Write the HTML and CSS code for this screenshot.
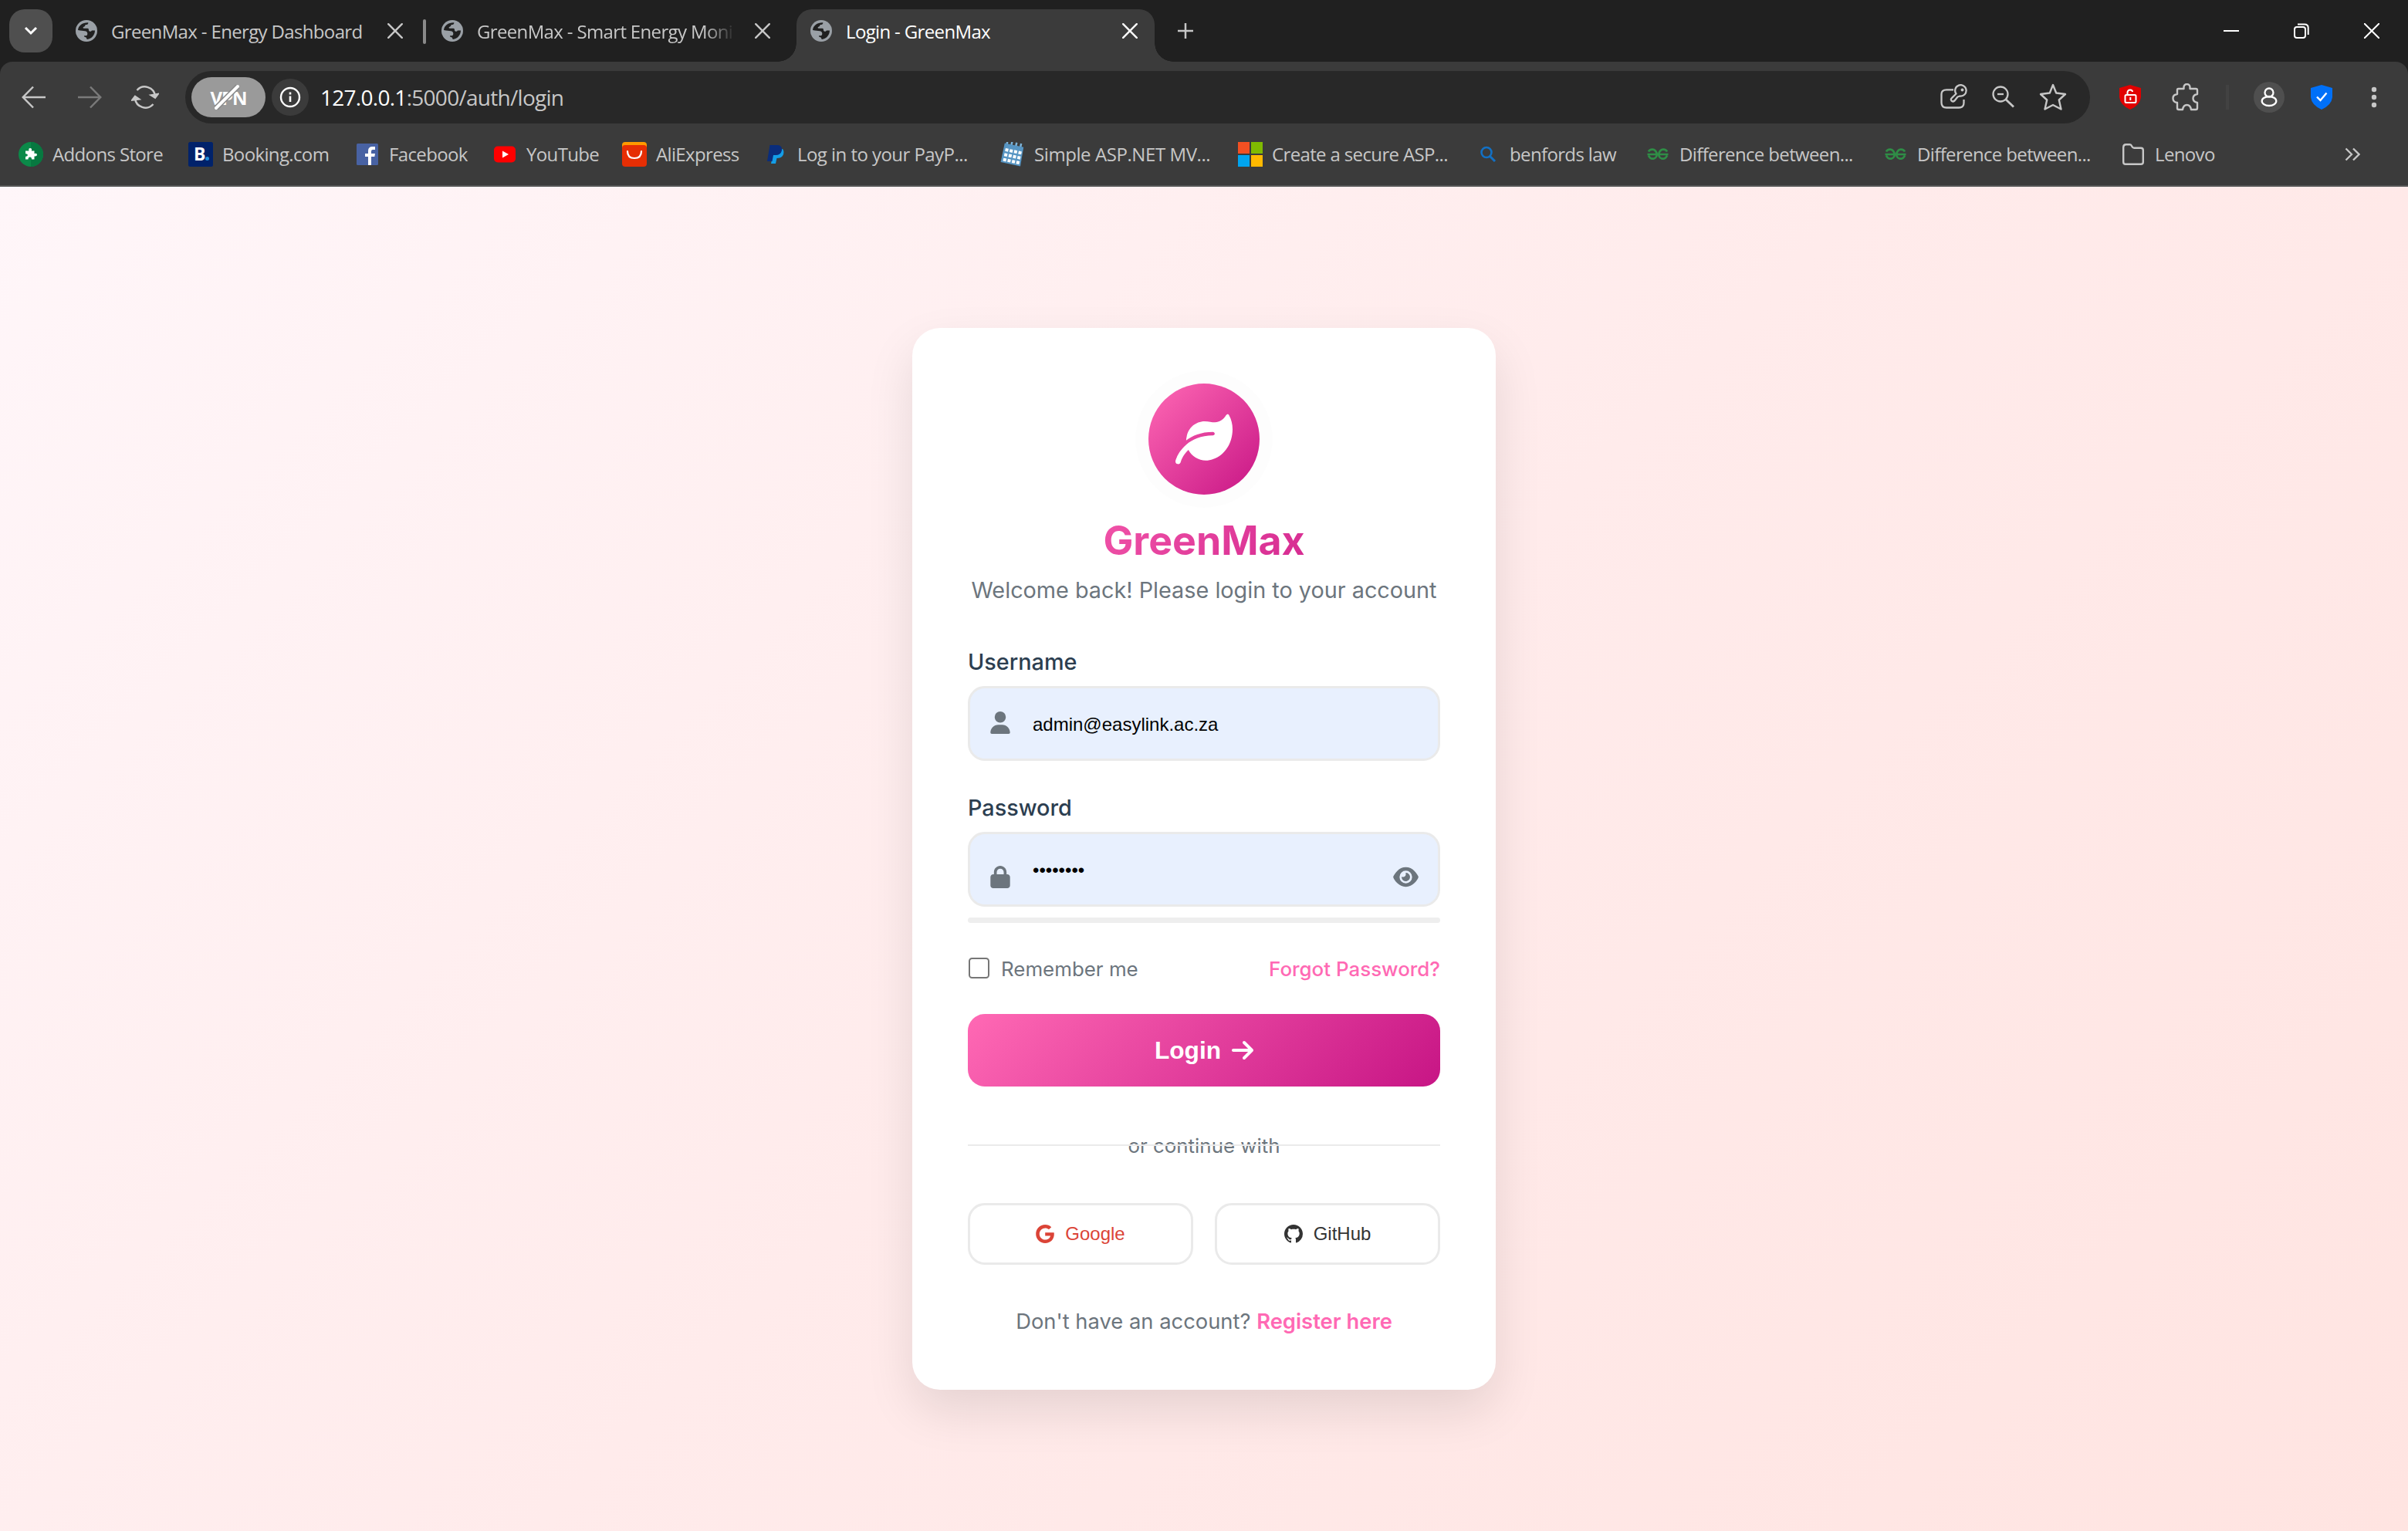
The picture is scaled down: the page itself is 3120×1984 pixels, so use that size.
FILE: index.html
```html
<!DOCTYPE html>
<html lang="en">
<head>
  <meta charset="UTF-8">
  <title>Login - GreenMax</title>
  <link rel="stylesheet" href="styles.css">
</head>
<body>
  <svg width="0" height="0" class="defs">
    <symbol id="globe" viewBox="0 0 28 28">
      <circle cx="14" cy="14" r="14" fill="#9aa0a6"/>
      <path class="land" d="M3 13C3.500 7 9 3 16.300 3.200C16.500 5.500 15 6 13 6C12 6.500 12.500 8.500 10.500 8.800C9 9.500 9.500 11 11 10.700H15.500C16.800 10.700 17 12 17 13.500C18 15.500 20 15 21 13.600H25C25 19.500 20.500 24.500 15 25C14 25 14.500 22.500 13 22.300C11.500 22.300 11 21.500 11 20.300H13.500C14.800 20.300 15.300 19 15.300 17.500C15.300 15.500 14 14.300 12 14.200C9.500 14 7 13.800 3 13Z"/>
    </symbol>
    <symbol id="x" viewBox="0 0 20 20"><path d="M1.200 1.200L18.800 18.800M18.800 1.200L1.200 18.800" stroke="currentColor" stroke-width="2.400" stroke-linecap="round"/></symbol>
    <symbol id="gfg" viewBox="0 0 28 16"><path d="M2 4.500C4 .5 10.500 0 12.500 6.500C14 14 5 16.500 2 9.500M26 4.500C24 .5 17.500 0 15.500 6.500C14 14 23 16.500 26 9.500M.5 8H27.500" fill="none" stroke="#2f8d46" stroke-width="2.700"/></symbol>
  </svg>

  <div class="tabs">
    <div class="tab-search"><svg width="18" height="12" viewBox="0 0 18 12"><path d="M2 2L9 9L16 2" fill="none" stroke="#fff" stroke-width="3"/></svg></div>
    <div class="tab">
      <svg class="globe"><use href="#globe"/></svg>
      <span class="tab-title">GreenMax - Energy Dashboard</span>
      <svg class="close"><use href="#x"/></svg>
    </div>
    <div class="tab-sep"></div>
    <div class="tab second">
      <svg class="globe"><use href="#globe"/></svg>
      <span class="tab-title fade">GreenMax - Smart Energy Moni</span>
      <svg class="close"><use href="#x"/></svg>
    </div>
    <div class="tab active">
      <svg class="globe"><use href="#globe"/></svg>
      <span class="tab-title">Login - GreenMax</span>
      <svg class="close"><use href="#x"/></svg>
    </div>
    <svg class="plus" width="20" height="20"><path d="M10 0V20M0 10H20" stroke="#c7c7c7" stroke-width="2.500"/></svg>
    <div class="window-buttons">
      <svg width="20" height="20"><path d="M0 10H20" stroke="#fff" stroke-width="2"/></svg>
      <svg width="20" height="20" fill="none" stroke="#fff" stroke-width="2"><rect x="1" y="5" width="14" height="14" rx="3"/><path d="M5 1.500H14Q18.700 1.500 18.700 6V15"/></svg>
      <svg width="20" height="20"><path d="M0 0L20 20M20 0L0 20" stroke="#fff" stroke-width="2"/></svg>
    </div>
  </div>

  <div class="toolbar-wrap">
    <div class="toolbar">
      <div class="nav">
        <svg width="32" height="30" fill="none" stroke="#c7c7c7" stroke-width="2.500"><path d="M31 15H2M15 1.500L1.800 15L15 28.500"/></svg>
        <svg width="32" height="30" fill="none" stroke="#7a7a7a" stroke-width="2.500"><path d="M1 15H30M17 1.500L30.200 15L17 28.500"/></svg>
        <svg width="36" height="30" fill="none" stroke="#c7c7c7" stroke-width="2.500"><path d="M7.500 6A13.500 13.500 0 0 1 31 13.500M28.500 24A13.500 13.500 0 0 1 5 16.500"/><path d="M26 12.500L31 15.500L34.500 11ZM1.500 18.500L5 14L10 17.500Z" fill="#c7c7c7"/></svg>
      </div>
      <div class="omnibox">
        <div class="vpn">VPN<svg class="vpn-slash" width="36" height="36"><path d="M4 32L32 4" stroke="#858585" stroke-width="7"/><path d="M4 32L32 4" stroke="#fff" stroke-width="4" stroke-linecap="round"/></svg></div>
        <div class="info"><svg width="28" height="28"><circle cx="14" cy="14" r="12" fill="none" stroke="#fff" stroke-width="2.400"/><path d="M14 12.500V20M14 7.500V10.500" stroke="#fff" stroke-width="2.600"/></svg></div>
        <div class="url"><b>127.0.0.1</b>:5000/auth/login</div>
        <div class="omni-icons">
          <svg width="36" height="34" viewBox="0 0 36 34" fill="none" stroke="#c7c7c7" stroke-width="2.300"><path d="M17 7.300H8Q1.500 7.300 1.500 13V24Q1.500 30.500 8 30.500H24Q30.500 30.500 30.500 24V20"/><path d="M20.500 12.500A7.200 7.200 0 1 1 25.500 15.500L22.500 16.500L18.500 21.500Q16 23.500 14.500 21.500T15 17.800Z" stroke-linejoin="round"/><circle cx="28.500" cy="7.500" r="1.900" fill="#c7c7c7" stroke="none"/></svg>
          <svg width="30" height="30" fill="none" stroke="#c7c7c7"><circle cx="11" cy="11" r="9.500" stroke-width="2.300"/><path d="M7 11H15" stroke-width="2.300"/><path d="M17.500 17.500L28 27.500" stroke-width="2.800"/></svg>
          <svg width="36" height="36" fill="none" stroke="#c7c7c7" stroke-width="2.400" stroke-linejoin="round"><path d="M18 2L22.200 12.500L34 14L25.800 21.500L28.500 33.500L18 28L7.500 33.500L10.200 21.500L2 14L13.800 12.500Z"/></svg>
        </div>
      </div>
      <div class="extensions">
        <svg width="28" height="32"><path d="M14 0L28 4V16Q27 26 14 32Q1 26 0 16V4Z" fill="#e10000"/><rect x="7.500" y="13" width="14" height="10" rx="1.500" fill="none" stroke="#fff" stroke-width="2"/><path d="M10.500 13V9.500Q11 6.500 14 6.500Q17 6.500 17 9" fill="none" stroke="#fff" stroke-width="2"/><path d="M14.300 16V20" stroke="#fff" stroke-width="2"/></svg>
        <svg width="36" height="36" fill="none" stroke="#c7c7c7" stroke-width="2.400" stroke-linejoin="round"><path d="M7 8.500Q7 7 8.500 7H15.500V5A4 4 0 0 1 23.500 5V7H31Q33 7 33 9V14Q27.500 15 27.500 19.500T33 25V32Q33 34 31 34H25Q24 28 19.500 28T14 34H9Q7 34 7 32V25Q1.500 24.500 1.500 19.500T7 14Z"/></svg>
        <div class="ext-sep"></div>
        <div class="avatar"><svg width="22" height="26" fill="none" stroke="#fff" stroke-width="2.300"><circle cx="11" cy="7" r="5.500"/><ellipse cx="11" cy="18" rx="9.300" ry="6"/></svg></div>
        <svg width="28" height="32"><path d="M14 0L28 4V16Q27 26 14 32Q1 26 0 16V4Z" fill="#0070f8"/><path d="M8 15.500L12.500 20L20.500 10.500" fill="none" stroke="#fff" stroke-width="2.400"/></svg>
        <svg width="8" height="28" fill="#c7c7c7"><circle cx="4" cy="4" r="3.200"/><circle cx="4" cy="14" r="3.200"/><circle cx="4" cy="24" r="3.200"/></svg>
      </div>
    </div>

    <div class="bookmarks">
      <div class="bm w-addons"><svg viewBox="0 0 32 32"><circle cx="16" cy="16" r="16" fill="#0b8a49"/><path d="M16 0A16 16 0 0 1 16 32Z" fill="#077840"/><path d="M9 11.500H13.500Q12.500 8 15 8Q18 8 16.800 11.500H20.500V15Q24 14 24 16.500T20.500 18.500V22.500H17Q17 19.500 14.800 19.500T12.500 22.500H9V19Q12 18.500 12 17T9 15Z" fill="#fff"/></svg><span>Addons Store</span></div>
      <div class="bm w-booking"><svg viewBox="0 0 32 32"><rect width="32" height="32" rx="2.500" fill="#00226b"/><circle cx="24.500" cy="21.500" r="2.500" fill="#1f8fdc"/><text x="7" y="24" class="b-letter">B</text></svg><span>Booking.com</span></div>
      <div class="bm w-facebook"><svg viewBox="0 0 32 32"><rect x="2" y="2" width="28" height="28" rx="1.500" fill="#4862a3"/><path d="M17 30V19H13V15H17V11.500Q17 6 22.500 6H26V10H23Q21 10 21 12V15H26L25.300 19H21V30Z" fill="#fff"/></svg><span>Facebook</span></div>
      <div class="bm w-youtube"><svg viewBox="0 0 32 32"><rect x="2" y="5.500" width="28" height="21" rx="5" fill="#f00"/><path d="M13 11.500L21 16L13 20.500Z" fill="#fff"/></svg><span>YouTube</span></div>
      <div class="bm w-ali"><svg viewBox="0 0 32 32"><rect width="32" height="20" rx="4" fill="#ff9a00"/><path d="M0 8Q0 4 4 4H28Q32 4 32 8V28Q32 32 28 32H4Q0 32 0 28Z" fill="#e62e04"/><path d="M7 12Q7 21 16 21T25 12" fill="none" stroke="#fff" stroke-width="2.200" stroke-linecap="round"/></svg><span>AliExpress</span></div>
      <div class="bm w-paypal"><svg viewBox="0 0 32 32"><path d="M13 13L25 9Q28 13 25 18Q23 21 17.500 21L16 28H10Z" fill="#139ee8"/><path d="M8.500 4H19Q25 5 24 11Q22.500 17 16 17H13L11.500 25H5Z" fill="#0a2d7c"/></svg><span>Log in to your PayP...</span></div>
      <div class="bm w-simple"><svg viewBox="0 0 32 32"><g transform="rotate(12 16 16)"><path d="M6 0V6M12 0V6M18 0V6M24 0V6" stroke="#7db3d8" stroke-width="2.500"/><path d="M3 4H28L29 29H3Z" fill="#5795c3"/><path d="M5.500 12H27M5.500 18.500H27M5.500 25H27" stroke="#fff" stroke-width="4" stroke-dasharray="4 1.800"/></g></svg><span>Simple ASP.NET MV...</span></div>
      <div class="bm w-create"><svg viewBox="0 0 32 32"><path d="M0 0H15V15H0Z" fill="#f25022"/><path d="M17 0H32V15H17Z" fill="#7fba00"/><path d="M0 17H15V32H0Z" fill="#00a4ef"/><path d="M17 17H32V32H17Z" fill="#ffb900"/></svg><span>Create a secure ASP...</span></div>
      <div class="bm w-benford"><svg viewBox="0 0 32 32"><circle cx="14" cy="13.500" r="6.500" fill="none" stroke="#1270c4" stroke-width="2.600"/><path d="M18.500 18.500L25 25" stroke="#1270c4" stroke-width="3"/></svg><span>benfords law</span></div>
      <div class="bm w-diff"><svg viewBox="0 0 32 32"><use href="#gfg" x="2" y="8" width="28" height="16"/></svg><span>Difference between...</span></div>
      <div class="bm w-diff"><svg viewBox="0 0 32 32"><use href="#gfg" x="2" y="8" width="28" height="16"/></svg><span>Difference between...</span></div>
      <div class="bm w-lenovo"><svg viewBox="0 0 32 32"><path d="M3.200 7Q3.200 3.300 6.500 3.300H11.500Q13.200 3.300 14.200 5.500T17 7.700H26Q28.800 7.700 28.800 10.500V26Q28.800 28.800 26 28.800H6Q3.200 28.800 3.200 26Z" fill="none" stroke="#c7c7c7" stroke-width="2.400"/></svg><span>Lenovo</span></div>
      <svg class="more" width="20" height="18" fill="none" stroke="#c7c7c7" stroke-width="2.300"><path d="M1.500 1.500L9 9L1.500 16.500M11 1.500L18.500 9L11 16.500"/></svg>
    </div>
  </div>

  <div class="page">
    <div class="card">
      <div class="logo"><svg width="74" height="74" viewBox="0 0 512 512" fill="#fff"><path d="M512 165.400c0 127.900-70 235.300-175.300 270.100c-20 7.900-41.800 12.500-64.700 12.500c-64.900 0-125.200-36.500-155.700-94.500c-54.100 49.900-68.700 107-69 108.100C44.700 472.600 34.900 480 24 480c-1.800 0-3.700-.2-5.600-.7c-12.900-3.100-20.800-16.100-17.700-29c9.600-39.500 90.500-226.400 335.300-226.400C344.800 224 352 216.800 352 208S344.800 192 336 192C228.600 192 151 226.600 96.300 267.600c-.2-10.800 1.200-21.800 4.500-33.100C112 158 180 96 262 96c40 0 62 10 92 10c40 0 76-24 99-62C461 29 475 28 481 43C501 79 512 122 512 165.400z"/></svg></div>
      <h1>GreenMax</h1>
      <p class="subtitle">Welcome back! Please login to your account</p>

      <label for="username">Username</label>
      <div class="field">
        <svg class="user-icon" width="26" height="29" viewBox="0 0 448 512"><path d="M224 256A128 128 0 1 0 224 0a128 128 0 1 0 0 256zm-45.700 48C79.800 304 0 383.800 0 482.300C0 498.700 13.300 512 29.700 512H418.300c16.400 0 29.700-13.300 29.700-29.700C448 383.800 368.200 304 269.700 304H178.300z"/></svg>
        <input id="username" type="text" value="admin@easylink.ac.za">
      </div>

      <label for="password" class="pw-label">Password</label>
      <div class="field">
        <svg class="lock-icon" width="26" height="29" viewBox="0 0 448 512"><path d="M144 144v48H304V144c0-44.200-35.800-80-80-80s-80 35.800-80 80zM80 192V144C80 64.500 144.500 0 224 0s144 64.500 144 144v48h16c35.300 0 64 28.700 64 64V448c0 35.300-28.700 64-64 64H64c-35.300 0-64-28.700-64-64V256c0-35.300 28.700-64 64-64H80z"/></svg>
        <input id="password" type="password" value="password">
        <svg class="eye-icon" width="33" height="29" viewBox="0 0 576 512"><path d="M288 32c-80.800 0-145.500 36.800-192.600 80.600C48.600 156 17.300 208 2.500 243.700c-3.300 7.900-3.300 16.700 0 24.600C17.300 304 48.600 356 95.400 399.400C142.500 443.200 207.200 480 288 480s145.500-36.800 192.600-80.600c46.800-43.500 78.100-95.400 93-131.100c3.300-7.900 3.300-16.700 0-24.600c-14.900-35.700-46.200-87.700-93-131.100C433.500 68.800 368.800 32 288 32zM144 256a144 144 0 1 1 288 0 144 144 0 1 1 -288 0zm144-64c0 35.300-28.700 64-64 64c-7.100 0-13.900-1.200-20.300-3.300c-5.500-1.800-11.900 1.600-11.700 7.400c.3 6.900 1.300 13.800 3.200 20.700c13.700 51.200 66.400 81.600 117.600 67.900s81.600-66.400 67.900-117.600c-11.100-41.500-47.800-69.400-88.600-71.100c-5.800-.2-9.200 6.100-7.400 11.700c2.100 6.400 3.300 13.200 3.300 20.300z"/></svg>
      </div>
      <div class="strength"></div>

      <div class="options">
        <div class="remember"><span class="box"></span>Remember me</div>
        <a class="forgot">Forgot Password?</a>
      </div>

      <button class="login-btn">Login <svg width="28" height="32" viewBox="0 0 448 512" fill="#fff"><path d="M438.600 278.600c12.500-12.500 12.500-32.800 0-45.300l-160-160c-12.500-12.500-32.800-12.500-45.300 0s-12.500 32.800 0 45.300L338.800 224 32 224c-17.700 0-32 14.300-32 32s14.300 32 32 32l306.700 0L233.400 393.400c-12.500 12.500-12.500 32.800 0 45.300s32.800 12.500 45.300 0l160-160z"/></svg></button>

      <div class="divider">or continue with</div>

      <div class="social">
        <button class="google"><svg width="24" height="24" viewBox="0 8 488 496" fill="currentColor"><path d="M488 261.800C488 403.300 391.100 504 248 504 110.800 504 0 393.200 0 256S110.800 8 248 8c66.800 0 123 24.500 166.300 64.900l-67.500 64.900C258.500 52.600 94.300 116.600 94.300 256c0 86.500 69.100 156.600 153.700 156.600 98.200 0 135-70.400 140.800-106.900H248v-85.300h236.100c2.300 12.700 3.900 24.900 3.900 41.400z"/></svg>Google</button>
        <button class="github"><svg width="24" height="24" viewBox="0 0 16 16" fill="currentColor"><path d="M8 0C3.580 0 0 3.580 0 8c0 3.540 2.290 6.530 5.470 7.590.4.070.55-.17.55-.38 0-.19-.01-.82-.01-1.490-2.010.37-2.530-.49-2.690-.94-.09-.23-.48-.94-.82-1.130-.28-.15-.68-.52-.01-.53.63-.01 1.080.58 1.230.82.72 1.210 1.870.87 2.330.66.070-.52.28-.87.51-1.070-1.780-.2-3.640-.89-3.640-3.950 0-.87.31-1.590.82-2.150-.08-.2-.36-1.020.08-2.120 0 0 .67-.21 2.200.82.64-.18 1.320-.27 2-.27s1.360.09 2 .27c1.530-1.040 2.200-.82 2.200-.82.44 1.100.16 1.920.08 2.120.51.56.82 1.270.82 2.150 0 3.070-1.870 3.750-3.650 3.950.29.25.54.73.54 1.480 0 1.070-.01 1.930-.01 2.200 0 .21.15.46.55.38A8.010 8.010 0 0 0 16 8c0-4.420-3.580-8-8-8z"/></svg>GitHub</button>
      </div>

      <p class="register">Don't have an account? <a>Register here</a></p>
    </div>
  </div>
</body>
</html>
```
FILE: styles.css
```css
* { box-sizing: border-box; margin: 0; padding: 0; }
body {
  width: 3120px; height: 1984px; overflow: hidden;
  display: flex; flex-direction: column;
  font-family: "Inter", sans-serif; background: #202020;
}
svg { display: block; flex-shrink: 0; }
.defs { position: absolute; }

/* tab strip */
.tabs {
  height: 80px; padding: 12px 37px 0 12px; display: flex; color: #c7c7c7;
  font: 24px "Open Sans", sans-serif;
}
.tab-search {
  width: 56px; height: 56px; border-radius: 20px; background: #4f4f4f;
  display: flex; align-items: center; justify-content: center;
}
.tab { height: 56px; width: 480px; padding: 0 26px 0 30px; display: flex; align-items: center; }
.globe { width: 28px; height: 28px; margin-right: 18px; }
.land { fill: #202020; }
.active .land { fill: #3b3b3b; }
.close { width: 20px; height: 20px; }
.tab-title { flex: 1; white-space: nowrap; letter-spacing: -0.65px; }
.fade { margin-right: 25px; -webkit-mask-image: linear-gradient(90deg, #000 88%, transparent); }
.tab-sep { width: 4px; height: 32px; margin-top: 13px; border-radius: 2px; background: #8a8a8a; }
.tab.second { width: 480px; padding: 0 34px 0 20px; }
.tab.active {
  position: relative; width: 464px; height: 68px; padding: 0 22px 12px 18px;
  background: #3b3b3b; border-radius: 20px 20px 0 0; color: #fff;
}
.tab.active::before, .tab.active::after {
  content: ""; position: absolute; bottom: 0; width: 24px; height: 24px;
  background: radial-gradient(circle at 0 0, transparent 23.5px, #3b3b3b 24px);
}
.tab.active::before { left: -24px; }
.tab.active::after { right: -24px; transform: scaleX(-1); }
.plus { margin: 18px 0 0 30px; }
.window-buttons { margin: 18px 0 0 auto; display: flex; gap: 71px; }

/* toolbar */
.toolbar-wrap { height: 162px; background: #3b3b3b; border-bottom: 2px solid #565656; border-radius: 16px 16px 0 0; }
.toolbar { height: 80px; padding-top: 12px; display: flex; }
.nav { width: 240px; height: 68px; padding-left: 28px; display: flex; align-items: center; gap: 40px; }
.nav svg:last-child { margin-left: -2px; }
.omnibox {
  width: 2468px; height: 68px; padding: 0 30px 0 8px; border-radius: 34px;
  background: #282828; display: flex; align-items: center;
}
.vpn {
  position: relative; width: 96px; height: 52px; border-radius: 26px; background: #9a9a9a;
  color: #fff; font: bold 24px/54px "Open Sans", sans-serif; text-align: center; letter-spacing: -1px;
}
.vpn-slash { position: absolute; left: 28px; top: 8px; }
.info {
  width: 48px; height: 48px; border-radius: 50%; margin-left: 8px; background: #3b3b3b;
  display: flex; align-items: center; justify-content: center;
}
.url { margin-left: 15px; color: #c7c7c7; font: 28px "Open Sans", sans-serif; letter-spacing: -0.72px; padding-bottom: 1px; }
.url b { font-weight: 400; color: #fff; }
.omni-icons { margin-left: auto; display: flex; align-items: center; gap: 31px; }
.extensions { height: 68px; padding-left: 38px; display: flex; align-items: center; }
.extensions > svg:nth-child(2) { margin: 0 34px 0 40px; }
.ext-sep { width: 4px; height: 32px; background: #424242; margin-right: 32px; }
.avatar {
  width: 40px; height: 40px; border-radius: 50%; background: #4f4f4f; margin-right: 34px;
  display: flex; align-items: center; justify-content: center;
}
.extensions > svg:last-child { margin-left: 50px; }

/* bookmarks bar */
.bookmarks {
  height: 80px; padding-left: 24px; display: flex; align-items: center;
  color: #c7c7c7; font: 24px "Open Sans", sans-serif; letter-spacing: -0.64px;
}
.bm { display: flex; align-items: center; gap: 12px; white-space: nowrap; }
.bm svg { width: 32px; height: 32px; }
.bm span { padding-bottom: 2px; }
.b-letter { font: bold 23px "Open Sans", sans-serif; fill: #fff; }
.w-addons, .w-benford { width: 220px; }
.w-booking { width: 216px; }
.w-facebook { width: 178px; }
.w-youtube { width: 168px; }
.w-ali { width: 183px; }
.w-paypal { width: 307px; letter-spacing: -0.55px; }
.w-simple, .w-create, .w-diff { width: 308px; }
.w-simple { letter-spacing: -0.42px; }
.w-lenovo { width: 290px; }

/* login page */
.page {
  flex: 1; display: flex; align-items: center; justify-content: center;
  background: linear-gradient(135deg, #fff6f9 0%, #ffebeb 50%, #ffe4e1 100%);
}
.card {
  width: 756px; height: 1376px; padding: 72px; border-radius: 36px; background: #fff;
  box-shadow: 0 27px 63px rgba(0, 0, 0, 0.1);
}
.logo {
  width: 144px; height: 144px; margin: 0 auto 29px; border-radius: 50%;
  background: linear-gradient(135deg, #ff69b4, #c71585);
  box-shadow: 0 0 0 17px rgba(0, 0, 0, 0.008);
  display: flex; align-items: center; justify-content: center;
}
h1 {
  font-size: 51.84px; line-height: 62px; font-weight: 700; text-align: center;
  background: linear-gradient(135deg, #ff69b4, #c71585);
  -webkit-background-clip: text; color: transparent;
}
.subtitle { margin: 15px -20px 58px; font-size: 28.8px; line-height: 36px; color: #6c757d; text-align: center; }
label { display: block; margin-bottom: 14px; font-size: 28.8px; line-height: 34px; font-weight: 500; color: #2c3e50; }
.pw-label { margin-top: 44px; }
.field {
  height: 97px; padding: 2px 25px 0 26px; display: flex; align-items: center;
  border: 3px solid #eaeaea; border-radius: 22px; background: #e8f0fe; fill: #6c757d;
}
.field input { flex: 1; margin-left: 29px; border: 0; outline: 0; background: none; color: #000; font: 24px "Liberation Sans", Arial, sans-serif; }
.user-icon { margin-bottom: 5px; }
.lock-icon, .eye-icon { margin-top: 17px; }
.strength { height: 7px; margin-top: 14px; border-radius: 3.5px; background: #eee; }
.options { height: 30px; margin: 45px 0 43px; display: flex; justify-content: space-between; font-size: 25.92px; line-height: 30px; color: #6c757d; }
.remember { display: flex; }
.box { width: 27px; height: 27px; margin: 0 15px 0 1px; border: 2px solid #767676; border-radius: 4.5px; }
.forgot { font-weight: 500; color: #ff69b4; }
button { cursor: pointer; }
.login-btn {
  width: 100%; height: 94px; border: 0; border-radius: 22px;
  background: linear-gradient(135deg, #ff69b4, #c71585); color: #fff;
  font: bold 31.68px "Liberation Sans", Arial, sans-serif;
  display: flex; align-items: center; justify-content: center; gap: 14px;
}
.divider {
  position: relative; margin: 61px 0 58px; font-size: 25.92px; line-height: 32px;
  color: #6c757d; text-align: center;
}
.divider::before { content: ""; position: absolute; left: 0; right: 0; top: 14px; height: 2px; background: #eaeaea; }
.social { display: flex; gap: 28px; }
.social button {
  flex: 1; height: 80px; border: 3px solid #eaeaea; border-radius: 22px; background: #fff;
  font: 24px "Liberation Sans", Arial, sans-serif;
  display: flex; align-items: center; justify-content: center; gap: 14px;
}
.social .google { color: #db4437; }
.social .github { color: #333; }
.register { margin-top: 56px; font-size: 27.36px; line-height: 34px; color: #6c757d; text-align: center; }
.register a { font-weight: 600; color: #ff69b4; }
```
